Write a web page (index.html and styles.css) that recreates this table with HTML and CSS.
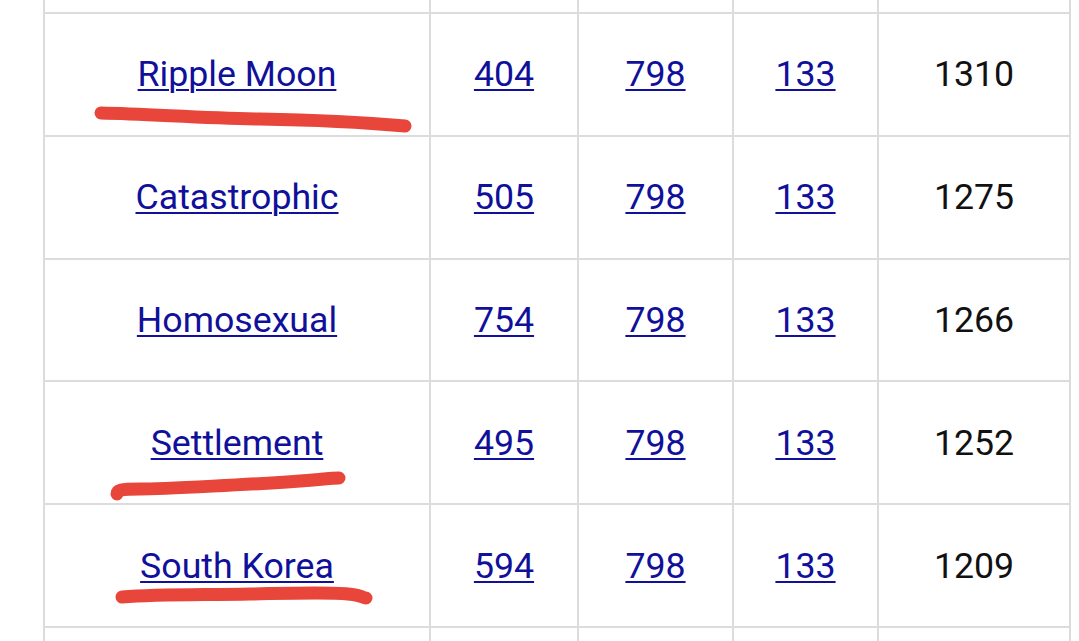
FILE: index.html
```html
<!DOCTYPE html>
<html lang="en">
<head>
<meta charset="utf-8">
<title>Table</title>
<link rel="stylesheet" href="styles.css">
</head>
<body>
<div class="page">
  <div class="grid">
    <div class="cell cut"></div><div class="cell cut"></div><div class="cell cut"></div><div class="cell cut"></div><div class="cell cut"></div>

    <div class="cell"><a href="#">Ripple Moon</a></div>
    <div class="cell"><a href="#">404</a></div>
    <div class="cell"><a href="#">798</a></div>
    <div class="cell"><a href="#">133</a></div>
    <div class="cell plain">1310</div>

    <div class="cell"><a href="#">Catastrophic</a></div>
    <div class="cell"><a href="#">505</a></div>
    <div class="cell"><a href="#">798</a></div>
    <div class="cell"><a href="#">133</a></div>
    <div class="cell plain">1275</div>

    <div class="cell"><a href="#">Homosexual</a></div>
    <div class="cell"><a href="#">754</a></div>
    <div class="cell"><a href="#">798</a></div>
    <div class="cell"><a href="#">133</a></div>
    <div class="cell plain">1266</div>

    <div class="cell"><a href="#">Settlement</a></div>
    <div class="cell"><a href="#">495</a></div>
    <div class="cell"><a href="#">798</a></div>
    <div class="cell"><a href="#">133</a></div>
    <div class="cell plain">1252</div>

    <div class="cell"><a href="#">South Korea</a></div>
    <div class="cell"><a href="#">594</a></div>
    <div class="cell"><a href="#">798</a></div>
    <div class="cell"><a href="#">133</a></div>
    <div class="cell plain">1209</div>

    <div class="cell"></div><div class="cell"></div><div class="cell"></div><div class="cell"></div><div class="cell"></div>
  </div>

  <svg class="marks" width="1079" height="641" viewBox="0 0 1079 641" aria-hidden="true">
    <path d="M101 113 C 150 114, 200 118, 260 119 S 360 122, 405 126" />
    <path d="M117 494 C 117 490, 120 489, 140 489 S 260 484, 300 481 S 332 478, 339 478" />
    <path d="M122 597 C 160 594, 200 595, 250 594 S 330 592, 348 594 S 362 598, 366 598" />
  </svg>
</div>
</body>
</html>
```

FILE: styles.css
```css
html, body {
  margin: 0;
  padding: 0;
  background: #ffffff;
}

.page {
  position: relative;
  width: 1079px;
  height: 641px;
  overflow: hidden;
  padding-left: 43px;
  box-sizing: border-box;
}

.grid {
  display: grid;
  grid-template-columns: 384px 146px 153px 143px 190px;
  grid-template-rows: 12px repeat(6, 120.8px);
  gap: 2px;
  padding: 0 2px 2px 2px;
  width: max-content;
  background: #dcdcdc;
}

.cell {
  background: #ffffff;
  display: flex;
  align-items: center;
  justify-content: center;
  padding-bottom: 0;
  box-sizing: border-box;
  font-family: Roboto, "Liberation Sans", sans-serif;
  font-size: 35.7px;
  color: #111111;
}

.cell a {
  color: #10109a;
  text-decoration: underline;
  text-decoration-thickness: 2px;
  text-underline-offset: 3px;
}

.marks {
  position: absolute;
  left: 0;
  top: 0;
  pointer-events: none;
}

.marks path {
  fill: none;
  stroke: #e8453b;
  stroke-width: 13;
  stroke-linecap: round;
  stroke-linejoin: round;
}
```
